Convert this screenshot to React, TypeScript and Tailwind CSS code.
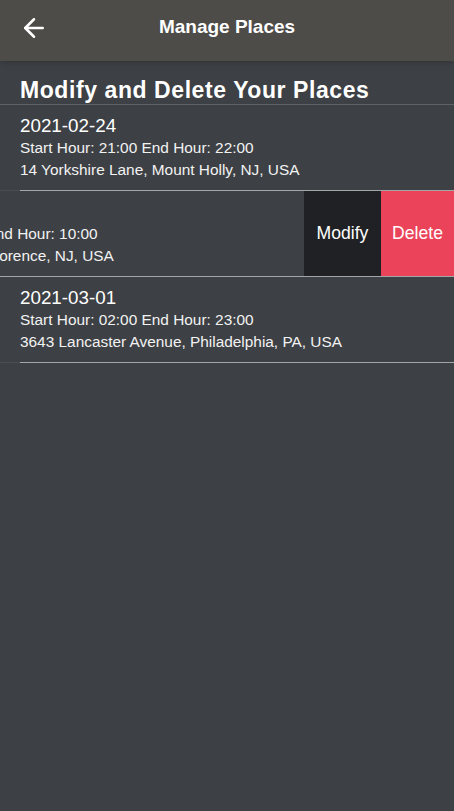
import { ArrowLeft } from "lucide-react";

type Place = {
    date: string;
    start: string;
    end: string;
    address: string;
};

const places: Place[] = [
    { date: "2021-02-24", start: "21:00", end: "22:00", address: "14 Yorkshire Lane, Mount Holly, NJ, USA" },
    { date: "2021-02-26", start: "09:00", end: "10:00", address: "200 Grant Street, Florence, NJ, USA" },
    { date: "2021-03-01", start: "02:00", end: "23:00", address: "3643 Lancaster Avenue, Philadelphia, PA, USA" },
];

function PlaceText({ place }: { place: Place }) {
    return (
        <div className="pt-[10px] pb-[9px] text-white whitespace-nowrap">
            <div className="text-[18.8px] leading-[22px]">{place.date}</div>
            <div className="text-[15.4px] leading-[22px] text-[#f2f2f2]">
                Start Hour: {place.start} End Hour: {place.end}
            </div>
            <div className="text-[15.4px] leading-[22px] text-[#f2f2f2]">{place.address}</div>
        </div>
    );
}

function PlaceRow({ place }: { place: Place }) {
    return (
        <div className="flex">
            <div className="w-5 shrink-0 border-b border-[#4b4f53]" />
            <div className="flex-1 border-b border-[#a4a5a6]">
                <PlaceText place={place} />
            </div>
        </div>
    );
}

function SwipedRow({ place }: { place: Place }) {
    return (
        <div className="flex overflow-hidden border-b border-[#a4a5a6]">
            <div className="w-full shrink-0 -ml-[150px] pl-[14px]">
                <PlaceText place={place} />
            </div>
            <button className="w-[77px] shrink-0 bg-[#202124] text-white text-[17.6px]">Modify</button>
            <button className="w-[73px] shrink-0 bg-[#eb445a] text-white text-[17.6px]">Delete</button>
        </div>
    );
}

export default function App() {
    return (
        <div
            className="w-[454px] h-[811px] bg-[#3d4044] overflow-hidden"
            style={{ fontFamily: '"Liberation Sans", Arial, sans-serif' }}
        >
            <header className="relative h-[61px] bg-[#4e4c49] flex items-center justify-center pb-[7px] shadow-md">
                <button className="absolute left-[19px] top-[13px] text-white">
                    <ArrowLeft size={30} strokeWidth={2} />
                </button>
                <h1 className="text-white text-[19px] font-bold">Manage Places</h1>
            </header>
            <h2 className="pt-[15px] px-5 text-white text-[23px] tracking-[0.025em] leading-7 font-bold border-b border-[#5e6165]">
                Modify and Delete Your Places
            </h2>
            <PlaceRow place={places[0]} />
            <SwipedRow place={places[1]} />
            <PlaceRow place={places[2]} />
        </div>
    );
}
